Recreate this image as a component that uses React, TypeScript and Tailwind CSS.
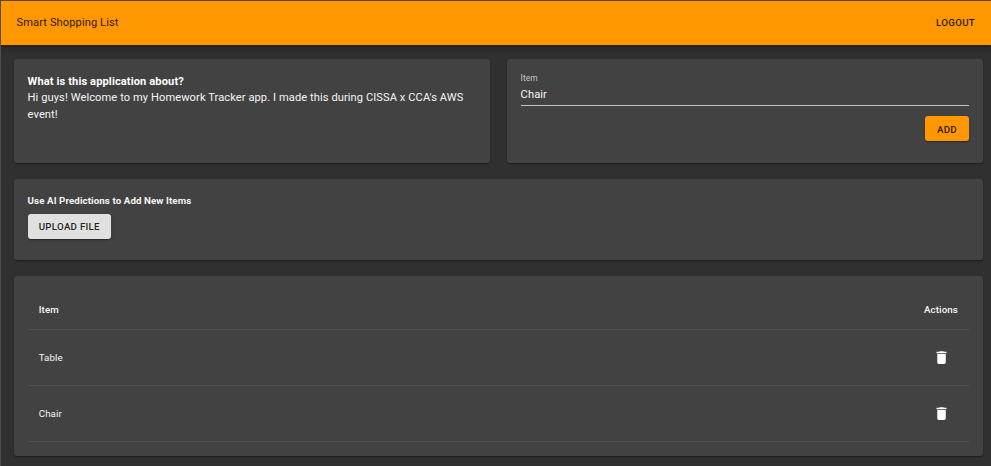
import React from "react";

const card =
  "rounded-[3px] bg-[#424242] pr-[14px] pl-[13.6px] shadow-[0_1px_1px_rgba(0,0,0,0.25),0_1px_2px_rgba(0,0,0,0.2)]";
const button =
  "flex h-[25px] items-center justify-center rounded-[3px] text-[9.72px] leading-none font-medium tracking-[0.278px] text-black/87 shadow-[0_2px_1px_-1px_rgba(0,0,0,0.2),0_1px_1px_rgba(0,0,0,0.14),0_1px_3px_rgba(0,0,0,0.12)]";

function TrashIcon() {
  return (
    <svg viewBox="0 0 24 24" className="h-[17px] w-[17px] fill-white">
      <path d="M6 19c0 1.1.9 2 2 2h8c1.1 0 2-.9 2-2V7H6v12zM19 4h-3.5l-1-1h-5l-1 1H5v2h14V4z" />
    </svg>
  );
}

function ItemRow({ name }: { name: string }) {
  return (
    <div className="flex h-14 items-center justify-between border-b border-[#515151] pr-[19px] pl-[11.2px]">
      <span className="pt-0.5">{name}</span>
      <button className="flex" aria-label="Delete">
        <TrashIcon />
      </button>
    </div>
  );
}

export default function App() {
  return (
    <div className="h-[466px] w-[991px] overflow-hidden border-l border-[#4f4f4f] bg-[#303030] font-['Roboto',sans-serif] text-[#f5f5f5]">
      <header className="-ml-px flex h-[45px] items-center justify-between border-t border-l border-t-[#5e4319] border-l-[#ffa526] bg-[#ff9800] pr-4 pl-[15.5px] text-black/87 shadow-[0_1px_3px_rgba(0,0,0,0.3),0_3px_6px_rgba(0,0,0,0.18)]">
        <span className="text-[11.11px] tracking-[0.095px]">Smart Shopping List</span>
        <button className="pt-px text-[9.72px] font-medium tracking-[0.278px]">LOGOUT</button>
      </header>
      <main className="flex flex-col gap-4 pt-[14px] pr-2 pl-[13px]">
        <div className="grid grid-cols-2 gap-[17px]">
          <section className={`${card} h-[104px] pt-[14.5px] text-[11.11px] leading-[16.67px]`}>
            <h2 className="font-bold tracking-[0.1px] text-white">What is this application about?</h2>
            <p className="tracking-[0.08px]">
              Hi guys! Welcome to my Homework Tracker app. I made this during CISSA x CCA's AWS event!
            </p>
          </section>
          <section className={`${card} flex h-[104px] flex-col pt-[14px]`}>
            <label className="text-[8.33px] leading-[10px] tracking-[0.078px] text-white/70">Item</label>
            <div className="flex h-[23px] items-center border-b border-[#c0c0c0] pt-0.5 text-[11.11px] tracking-[0.104px]">
              Chair
            </div>
            <button className={`${button} mt-[10px] w-[44px] self-end bg-[#ff9800] pt-0.5`}>ADD</button>
          </section>
        </div>
        <section className={`${card} h-[81px] pt-[15px]`}>
          <h2 className="text-[9.72px] leading-[14px] font-bold tracking-[0.09px]">
            Use AI Predictions to Add New Items
          </h2>
          <button className={`${button} mt-1.5 w-[83.4px] bg-[#e0e0e0]`}>UPLOAD FILE</button>
        </section>
        <section className={`${card} h-[180px] pt-[14px] text-[9.72px] tracking-[0.08px]`}>
          <div className="flex h-10 items-center justify-between border-b border-[#515151] px-[11.2px] pt-0.5 font-medium">
            <span>Item</span>
            <span>Actions</span>
          </div>
          <ItemRow name="Table" />
          <ItemRow name="Chair" />
        </section>
      </main>
    </div>
  );
}
